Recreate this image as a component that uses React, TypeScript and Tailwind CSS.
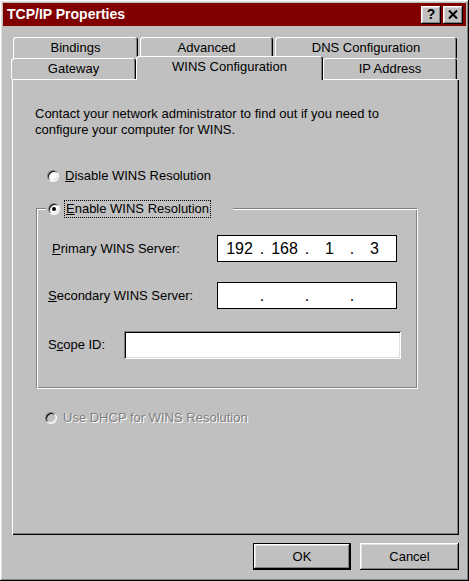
import React from "react";

const raised =
  "shadow-[inset_-1px_-1px_#000,inset_1px_1px_#fff,inset_-2px_-2px_#808080,inset_2px_2px_#dfdfdf]";
const sunken =
  "shadow-[inset_1px_1px_#808080,inset_-1px_-1px_#fff,inset_2px_2px_#000,inset_-2px_-2px_#dfdfdf]";

function Radio({ checked, disabled }: { checked?: boolean; disabled?: boolean }) {
  return (
    <span
      className={`inline-flex h-[12px] w-[12px] shrink-0 items-center justify-center rounded-full border border-t-[#808080] border-l-[#808080] border-r-white border-b-white shadow-[inset_1px_1px_#000,inset_-1px_-1px_#dfdfdf] ${
        disabled ? "bg-[#c0c0c0]" : "bg-white"
      }`}
    >
      {checked && <span className="h-[4px] w-[4px] rounded-full bg-black" />}
    </span>
  );
}

function Tab({ label, width, active }: { label: string; width: string; active?: boolean }) {
  return (
    <div
      className={`${width} ${
        active
          ? "relative z-10 -mb-[1px] h-[24px] pt-[3px] bg-[#c0c0c0]"
          : "h-[21px] pt-[3px]"
      } flex justify-center rounded-t-[3px] shadow-[inset_1px_1px_#fff,inset_-1px_0_#000,inset_-2px_0_#808080] leading-[16px]`}
    >
      {label}
    </div>
  );
}

function IpBox({ parts }: { parts: string[] }) {
  return (
    <div className="flex h-[27px] w-[180px] items-center border border-black bg-white pl-[3px] text-[16px]">
      {parts.map((p, i) => (
        <React.Fragment key={i}>
          <span className="w-[37px] text-center">{p}</span>
          {i < 3 && <span className="w-[8px] text-center">.</span>}
        </React.Fragment>
      ))}
    </div>
  );
}

export default function App() {
  return (
    <div
      className={`flex h-[581px] w-[469px] flex-col bg-[#c0c0c0] font-['Liberation_Sans',Arial,sans-serif] text-[13px] text-black ${raised}`}
    >
      {/* title bar */}
      <div className="mx-[3px] mt-[3px] flex h-[23px] items-center justify-between bg-[#800000] pl-[4px] pr-[3px]">
        <span className="text-[14px] font-bold text-white">TCP/IP Properties</span>
        <div className="flex gap-[2px]">
          <div className={`flex h-[18px] w-[20px] items-center justify-center text-[14px] font-bold bg-[#c0c0c0] ${raised}`}>
            ?
          </div>
          <div className={`flex h-[18px] w-[20px] items-center justify-center bg-[#c0c0c0] ${raised}`}>
            <svg width="10" height="9" viewBox="0 0 10 9">
              <path d="M1 0.5 L9 8.5 M9 0.5 L1 8.5" stroke="#000" strokeWidth="2" />
            </svg>
          </div>
        </div>
      </div>

      {/* tabs */}
      <div className="ml-[11px] mt-[11px] w-[447px]">
        <div className="flex pl-[2px]">
          <Tab label="Bindings" width="w-[125px]" />
          <div className="w-[2px]" />
          <Tab label="Advanced" width="w-[133px]" />
          <div className="w-[2px]" />
          <Tab label="DNS Configuration" width="w-[182px]" />
        </div>
        <div className="flex h-[21px] items-end">
          <Tab label="Gateway" width="w-[125px]" />
          <Tab label="WINS Configuration" width="w-[187px]" active />
          <Tab label="IP Address" width="w-[134px]" />
        </div>
      </div>

      {/* panel */}
      <div className="ml-[12px] flex h-[456px] w-[447px] flex-col shadow-[inset_1px_1px_#fff,inset_-1px_-1px_#000,inset_-2px_-2px_#808080]">
        <p className="ml-[23px] mt-[27px] leading-[16px]">
          Contact your network administrator to find out if you need to
          <br />
          configure your computer for WINS.
        </p>

        <div className="ml-[35px] mt-[29px] flex h-[18px] items-center">
          <Radio />
          <span className="ml-[4px] px-[2px]">
            <u>D</u>isable WINS Resolution
          </span>
        </div>

        {/* group box */}
        <div className="ml-[24px] mt-[23px] flex h-[181px] w-[382px] flex-col border border-t-[#808080] border-l-[#808080] border-r-white border-b-white shadow-[inset_1px_1px_#fff,inset_-1px_-1px_#808080]">
          <div className="-mt-[9px] ml-[9px] flex h-[18px] w-[187px] items-center bg-[#c0c0c0] pl-[2px]">
            <Radio checked />
            <span className="ml-[4px] border border-dotted border-black px-[1px] leading-[16px]">
              <u>E</u>nable WINS Resolution
            </span>
          </div>

          <div className="mt-[17px] flex items-center">
            <span className="w-[180px] pl-[15px]">
              <u>P</u>rimary WINS Server:
            </span>
            <IpBox parts={["192", "168", "1", "3"]} />
          </div>

          <div className="mt-[20px] flex items-center">
            <span className="w-[180px] pl-[11px]">
              <u>S</u>econdary WINS Server:
            </span>
            <IpBox parts={["", "", "", ""]} />
          </div>

          <div className="mt-[22px] flex items-center">
            <span className="w-[87px] pl-[11px]">
              S<u>c</u>ope ID:
            </span>
            <div className={`h-[28px] w-[277px] bg-white ${sunken}`} />
          </div>
        </div>

        <div className="ml-[33px] mt-[20px] flex h-[18px] items-center">
          <Radio disabled />
          <span className="ml-[6px] text-[#808080] [text-shadow:1px_1px_0_#fff]">
            Use DHCP for WINS Resolution
          </span>
        </div>
      </div>

      {/* buttons */}
      <div className="mt-[8px] flex justify-end gap-[9px] pr-[10px]">
        <div className="flex h-[27px] w-[98px] items-center justify-center border border-black">
          <div className={`flex h-full w-full items-center justify-center ${raised}`}>OK</div>
        </div>
        <div className={`flex h-[27px] w-[99px] items-center justify-center ${raised}`}>Cancel</div>
      </div>
    </div>
  );
}
